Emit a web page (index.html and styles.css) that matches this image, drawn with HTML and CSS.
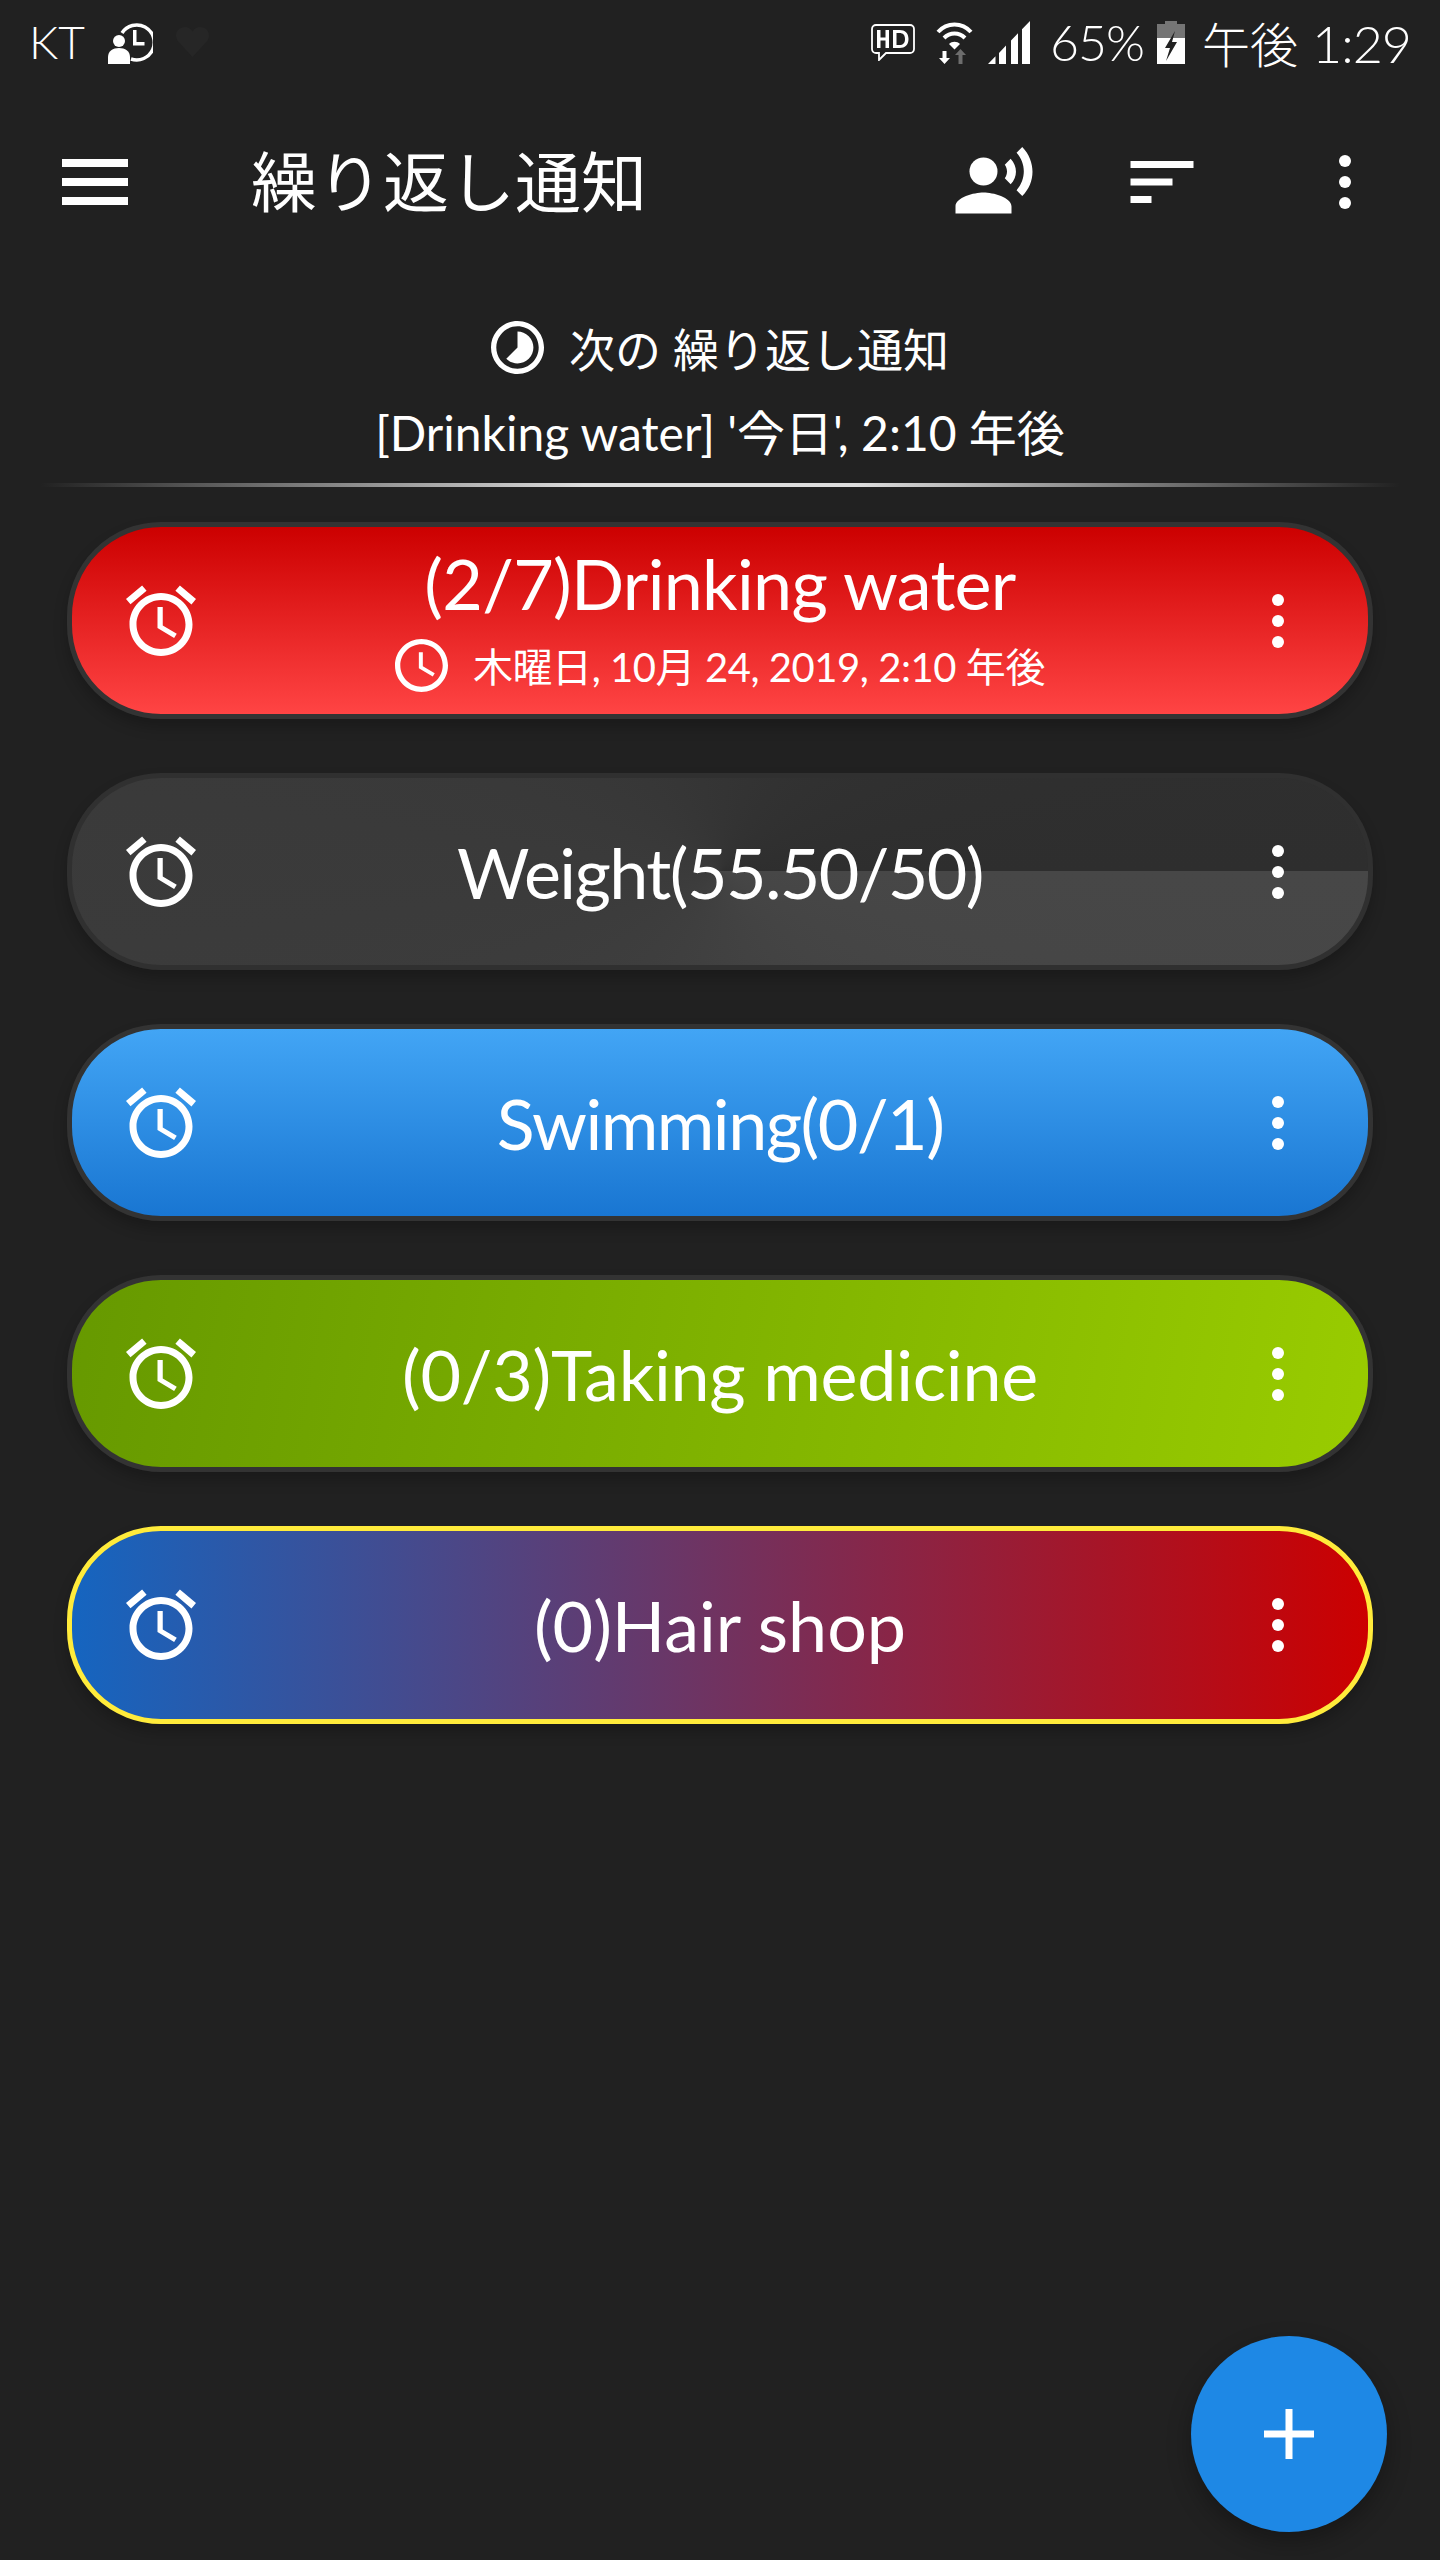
FILE: index.html
```html
<!DOCTYPE html>
<html lang="ja">
<head>
    <meta charset="UTF-8">
    <meta name="viewport" content="width=device-width, initial-scale=1.0">
    <title>繰り返し通知</title>
    <link rel="stylesheet" href="styles.css">
</head>
<body>
    <div class="status-bar">
        <div class="status-left">
            <span class="carrier">KT</span>
            <svg class="st-person" viewBox="0 0 45 44"><path d="M14 13A17.500 17.500 0 1 1 23 39" fill="none" stroke="#fff" stroke-width="3.500"/><path d="M25 10h3.500v12h8v3.500H25z" fill="#fff"/><circle cx="11" cy="21" r="6" fill="#fff"/><path d="M0 44V37c0-6 5-9 11-9s11 3 11 9v7z" fill="#fff"/></svg>
            <svg class="st-heart" viewBox="0 0 24 24"><path d="M12 21.400 2.800 11.500C-.5 7.500 2 2 7 2c2 0 4 1 5 3 1-2 3-3 5-3 5 0 7.500 5.500 4.200 9.500z" fill="#262626"/></svg>
        </div>
        <div class="status-right">
            <svg class="st-hd" viewBox="0 0 44 37"><path d="M5 1h34a4 4 0 0 1 4 4v20a4 4 0 0 1-4 4H15l-7 7v-7H5a4 4 0 0 1-4-4V5a4 4 0 0 1 4-4z" fill="none" stroke="#fff" stroke-width="1.800"/><path d="M6 6h3.500v7.500h5V6H18v18h-3.500v-7.500h-5V24H6zM22 6h6.500c5.500 0 9 3 9 9s-3.500 9-9 9H22zm3.500 3v12h3c3.500 0 5.500-2 5.500-6s-2-6-5.500-6z" fill="#fff"/></svg>
            <svg class="st-wifi" viewBox="0 0 37 43"><path d="M2 11C11 1 26 1 35 11" fill="none" stroke="#fff" stroke-width="4"/><path d="M8 17c6-6 15-6 21 0" fill="none" stroke="#fff" stroke-width="4"/><path d="M13 23c3-3 8-3 11 0l-5.500 5.500z" fill="#fff"/><path d="M10.500 30v7H14l-5.500 6L3 37h3.500v-7z" fill="#fff"/><path d="M26.500 43v-9H30l-5.500-6-5.500 6h3.500v9z" fill="#6d6d6d"/></svg>
            <svg class="st-signal" viewBox="0 0 42 43"><path d="M0 43 7.500 35.300V43zM11 43V32l7-7.400V43zM23 43V19.400l7-7.100V43zM34 43V8.200L42 0v43z" fill="#fff"/></svg>
            <span class="battery-pct">65%</span>
            <svg class="st-battery" viewBox="0 0 28 43"><path d="M8 0h12v3h8v14H0V3h8z" fill="#757575"/><path d="M0 17h28v26H0z" fill="#fff"/><path d="M18 10 8 27h5l-4 13 11-19h-5l3-11z" fill="#212121"/></svg>
            <span class="clock"><span class="clock-ampm">午後</span> <span class="clock-time">1:29</span></span>
        </div>
    </div>

    <div class="toolbar">
        <svg class="tb-menu" viewBox="0 0 66 46"><path d="M0 0h66v8H0zM0 19h66v8H0zM0 38h66v8H0z" fill="#fff"/></svg>
        <div class="tb-title">繰り返し通知</div>
        <svg class="tb-icon" viewBox="0 0 24 24"><circle cx="9" cy="9" r="4" fill="#fff"/><path d="M9 15c-2.670 0-8 1.340-8 4v2h16v-2c0-2.660-5.330-4-8-4zm7.760-9.640-1.680 1.690c.84 1.180.84 2.710 0 3.890l1.680 1.690c2.020-2.020 2.020-5.070 0-7.270zM20.070 2l-1.630 1.630c2.770 3.020 2.770 7.560 0 10.740L20.070 16c3.900-3.890 3.910-9.950 0-14z" fill="#fff"/></svg>
        <svg class="tb-icon tb-sort" viewBox="0 0 24 24"><path d="M3 18h6v-2H3v2zM3 6v2h18V6H3zm0 7h12v-2H3v2z" fill="#fff"/></svg>
        <svg class="tb-more" viewBox="0 0 24 24"><circle cx="12" cy="5" r="2" fill="#fff"/><circle cx="12" cy="12" r="2" fill="#fff"/><circle cx="12" cy="19" r="2" fill="#fff"/></svg>
    </div>

    <div class="next-box">
        <div class="next-head">
            <svg class="next-icon" viewBox="2 2 20 20"><path d="M16.240 7.760C15.070 6.590 13.540 6 12 6v6l-4.240 4.240c2.340 2.340 6.140 2.340 8.490 0 2.340-2.340 2.340-6.140-.01-8.480zM12 2C6.480 2 2 6.480 2 12s4.480 10 10 10 10-4.480 10-10S17.520 2 12 2zm0 18c-4.420 0-8-3.580-8-8s3.580-8 8-8 8 3.580 8 8-3.580 8-8 8z" fill="#fff"/></svg>
            <span>次の 繰り返し通知</span>
        </div>
        <div class="next-line">[Drinking water] '今日', 2:10 年後</div>
    </div>
    <div class="divider"></div>

    <div class="card-list">
        <div class="card card-red">
            <svg class="alarm" viewBox="0 0 24 24"><path d="M22 5.720l-4.600-3.860-1.290 1.530 4.600 3.860L22 5.720zM7.880 3.390L6.600 1.860 2 5.710l1.290 1.530 4.590-3.850zM12.500 8H11v6l4.750 2.850.75-1.230-4-2.370V8zM12 4c-4.970 0-9 4.030-9 9s4.030 9 9 9 9-4.030 9-9-4.030-9-9-9zm0 16c-3.870 0-7-3.130-7-7s3.130-7 7-7 7 3.130 7 7-3.130 7-7 7z" fill="#fff"/></svg>
            <div class="card-text">
                <div class="card-title card-title-top">(2/7)Drinking water</div>
                <div class="card-sub">
                    <svg class="sub-clock" viewBox="2 2 20 20"><path d="M11.990 2C6.470 2 2 6.480 2 12s4.470 10 9.990 10C17.520 22 22 17.520 22 12S17.520 2 11.990 2zM12 20c-4.420 0-8-3.580-8-8s3.580-8 8-8 8 3.580 8 8-3.580 8-8 8zm.5-13H11v6l5.250 3.150.75-1.230-4.500-2.670z" fill="#fff"/></svg>
                    <span>木曜日, 10月 24, 2019, 2:10 年後</span>
                </div>
            </div>
            <svg class="more" viewBox="0 0 24 24"><circle cx="12" cy="5" r="2" fill="#fff"/><circle cx="12" cy="12" r="2" fill="#fff"/><circle cx="12" cy="19" r="2" fill="#fff"/></svg>
        </div>

        <div class="card card-gray">
            <svg class="alarm" viewBox="0 0 24 24"><path d="M22 5.720l-4.600-3.860-1.290 1.530 4.600 3.860L22 5.720zM7.880 3.390L6.600 1.860 2 5.710l1.290 1.530 4.590-3.850zM12.500 8H11v6l4.750 2.850.75-1.230-4-2.370V8zM12 4c-4.970 0-9 4.030-9 9s4.030 9 9 9 9-4.030 9-9-4.030-9-9-9zm0 16c-3.870 0-7-3.130-7-7s3.130-7 7-7 7 3.130 7 7-3.130 7-7 7z" fill="#fff"/></svg>
            <div class="card-text"><div class="card-title">Weight(55.50/50)</div></div>
            <svg class="more" viewBox="0 0 24 24"><circle cx="12" cy="5" r="2" fill="#fff"/><circle cx="12" cy="12" r="2" fill="#fff"/><circle cx="12" cy="19" r="2" fill="#fff"/></svg>
        </div>

        <div class="card card-blue">
            <svg class="alarm" viewBox="0 0 24 24"><path d="M22 5.720l-4.600-3.860-1.290 1.530 4.600 3.860L22 5.720zM7.880 3.390L6.600 1.860 2 5.710l1.290 1.530 4.590-3.850zM12.500 8H11v6l4.750 2.850.75-1.230-4-2.370V8zM12 4c-4.970 0-9 4.030-9 9s4.030 9 9 9 9-4.030 9-9-4.030-9-9-9zm0 16c-3.870 0-7-3.130-7-7s3.130-7 7-7 7 3.130 7 7-3.130 7-7 7z" fill="#fff"/></svg>
            <div class="card-text"><div class="card-title">Swimming(0/1)</div></div>
            <svg class="more" viewBox="0 0 24 24"><circle cx="12" cy="5" r="2" fill="#fff"/><circle cx="12" cy="12" r="2" fill="#fff"/><circle cx="12" cy="19" r="2" fill="#fff"/></svg>
        </div>

        <div class="card card-green">
            <svg class="alarm" viewBox="0 0 24 24"><path d="M22 5.720l-4.600-3.860-1.290 1.530 4.600 3.860L22 5.720zM7.880 3.390L6.600 1.860 2 5.710l1.290 1.530 4.590-3.850zM12.500 8H11v6l4.750 2.850.75-1.230-4-2.370V8zM12 4c-4.970 0-9 4.030-9 9s4.030 9 9 9 9-4.030 9-9-4.030-9-9-9zm0 16c-3.870 0-7-3.130-7-7s3.130-7 7-7 7 3.130 7 7-3.130 7-7 7z" fill="#fff"/></svg>
            <div class="card-text"><div class="card-title">(0/3)Taking medicine</div></div>
            <svg class="more" viewBox="0 0 24 24"><circle cx="12" cy="5" r="2" fill="#fff"/><circle cx="12" cy="12" r="2" fill="#fff"/><circle cx="12" cy="19" r="2" fill="#fff"/></svg>
        </div>

        <div class="card card-mixed">
            <svg class="alarm" viewBox="0 0 24 24"><path d="M22 5.720l-4.600-3.860-1.290 1.530 4.600 3.860L22 5.720zM7.880 3.390L6.600 1.860 2 5.710l1.290 1.530 4.590-3.850zM12.500 8H11v6l4.750 2.850.75-1.230-4-2.370V8zM12 4c-4.970 0-9 4.030-9 9s4.030 9 9 9 9-4.030 9-9-4.030-9-9-9zm0 16c-3.870 0-7-3.130-7-7s3.130-7 7-7 7 3.130 7 7-3.130 7-7 7z" fill="#fff"/></svg>
            <div class="card-text"><div class="card-title">(0)Hair shop</div></div>
            <svg class="more" viewBox="0 0 24 24"><circle cx="12" cy="5" r="2" fill="#fff"/><circle cx="12" cy="12" r="2" fill="#fff"/><circle cx="12" cy="19" r="2" fill="#fff"/></svg>
        </div>
    </div>

    <div class="fab">
        <svg class="fab-plus" viewBox="0 0 50 50"><path d="M21.500 0h7v21.500H50v7H28.500V50h-7V28.500H0v-7h21.500z" fill="#fff"/></svg>
    </div>
</body>
</html>
```

FILE: styles.css
```css
* {
    box-sizing: border-box;
}
html, body {
    height: 100%;
}
body {
    position: relative;
    margin: 0;
    background-color: #212121;
    color: #fff;
    font-family: Lato, "Noto Sans CJK JP", sans-serif;
    overflow: hidden;
}
svg {
    display: block;
    flex: none;
}

/* status bar */
.status-bar {
    display: flex;
    justify-content: space-between;
    align-items: center;
    height: 84px;
    padding: 0 29px 0 29px;
}
.status-left, .status-right {
    display: flex;
    align-items: center;
}
.carrier {
    font-size: 46px;
    font-weight: 300;
    line-height: 84px;
    margin-right: 23px;
}
.st-person {
    width: 45px;
    height: 44px;
    margin-right: 21px;
}
.st-heart {
    width: 37px;
    height: 37px;
}
.st-hd {
    width: 44px;
    height: 37px;
    margin-right: 21px;
}
.st-wifi {
    width: 37px;
    height: 43px;
    margin-right: 15px;
}
.st-signal {
    width: 42px;
    height: 43px;
    margin-right: 20px;
}
.battery-pct {
    font-size: 50px;
    font-weight: 300;
    letter-spacing: -1px;
    margin-right: 13px;
}
.st-battery {
    width: 28px;
    height: 43px;
    margin-right: 17px;
}
.clock {
    font-size: 52px;
    font-weight: 300;
    white-space: nowrap;
}
.clock-ampm {
    font-size: 48px;
}
.clock-time {
    letter-spacing: -1px;
}

/* toolbar */
.toolbar {
    display: flex;
    align-items: center;
    height: 196px;
    padding: 0 59px 0 62px;
}
.tb-menu {
    width: 66px;
    height: 46px;
    margin-right: 123px;
}
.tb-title {
    flex: 1;
    font-size: 66px;
    line-height: 84px;
    white-space: nowrap;
}
.tb-icon {
    width: 84px;
    height: 84px;
}
.tb-sort {
    margin-left: 84px;
}
.tb-more {
    width: 72px;
    height: 72px;
    margin-left: 105px;
}

/* next alarm */
.next-box {
    display: flex;
    flex-direction: column;
    align-items: center;
    padding-top: 36px;
}
.next-head {
    display: flex;
    align-items: center;
    gap: 25px;
    height: 62px;
    font-size: 46px;
    white-space: nowrap;
}
.next-icon {
    width: 53px;
    height: 53px;
}
.next-line {
    margin-top: 24px;
    height: 62px;
    font-size: 48px;
    line-height: 62px;
    white-space: nowrap;
}
.divider {
    height: 4px;
    margin: 19px 40px 0;
    background: linear-gradient(to right, transparent, #dddddd 40%, #dddddd 60%, transparent);
}

/* list */
.card-list {
    display: flex;
    flex-direction: column;
    gap: 54px;
    padding: 35px 67px 0;
}
.card {
    display: flex;
    align-items: center;
    height: 197px;
    padding: 0 54px 0 47px;
    border: 5px solid #333333;
    border-radius: 94px;
    box-shadow: 0 8px 14px rgba(0, 0, 0, 0.22);
}
.alarm {
    width: 84px;
    height: 84px;
}
.more {
    width: 72px;
    height: 72px;
}
.card-text {
    flex: 1;
    display: flex;
    flex-direction: column;
    align-items: center;
    min-width: 0;
    padding-right: 5px;
}
.card-title {
    font-size: 70px;
    line-height: 84px;
    white-space: nowrap;
}
.card-title-top {
    margin-top: -9px;
}
.card-sub {
    display: flex;
    align-items: center;
    gap: 25px;
    height: 53px;
    margin-top: 14px;
    font-size: 40px;
    letter-spacing: -0.45px;
    white-space: nowrap;
}
.sub-clock {
    width: 53px;
    height: 53px;
}
.card-red {
    background: linear-gradient(to bottom, #cc0000, #ff4444);
}
.card-red .card-title {
    letter-spacing: -0.7px;
}
.card-gray {
    background: conic-gradient(from 90deg, #474747, #2e2e2e);
    border-color: #303030;
}
.card-gray .card-title {
    letter-spacing: -1.6px;
}
.card-blue {
    background: linear-gradient(to bottom, #42a5f5, #1976d2);
}
.card-blue .card-title {
    letter-spacing: -1.5px;
}
.card-green {
    background: linear-gradient(100deg, #669900, #99cc00);
}
.card-green .card-title {
    letter-spacing: -0.25px;
}
.card-mixed {
    background: linear-gradient(to right, #1565c0, #cc0000);
    border-color: #ffeb3b;
    height: 198px;
}

.fab {
    position: absolute;
    left: 1191px;
    top: 2336px;
    display: flex;
    align-items: center;
    justify-content: center;
    width: 196px;
    height: 196px;
    border-radius: 50%;
    background-color: #1e88e5;
    box-shadow: 0 10px 24px rgba(0, 0, 0, 0.3);
}
.fab-plus {
    width: 50px;
    height: 50px;
}
```
